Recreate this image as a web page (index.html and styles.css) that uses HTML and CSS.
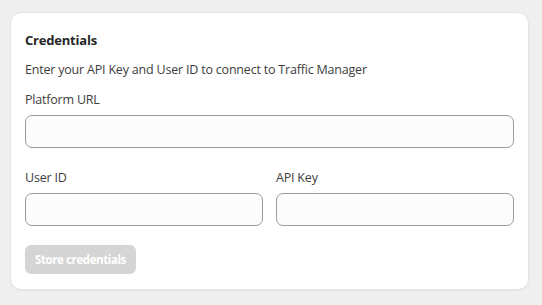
FILE: index.html
```html
<!DOCTYPE html>
<html lang="en">
<head>
<meta charset="utf-8">
<title>Credentials</title>
<link rel="stylesheet" href="styles.css">
</head>
<body>
<div class="page">
  <section class="card">
    <h2 class="title">Credentials</h2>
    <p class="desc">Enter your API Key and User ID to connect to Traffic Manager</p>
    <div class="field">
      <label class="label" for="url">Platform URL</label>
      <input class="input" id="url" type="text">
    </div>
    <div class="row">
      <div class="field">
        <label class="label" for="uid">User ID</label>
        <input class="input" id="uid" type="text">
      </div>
      <div class="field">
        <label class="label" for="key">API Key</label>
        <input class="input" id="key" type="text">
      </div>
    </div>
    <div class="actions">
      <button class="btn" type="button" disabled>Store credentials</button>
    </div>
  </section>
</div>
</body>
</html>
```
FILE: styles.css
```css
html, body {
  margin: 0;
  padding: 0;
  background: #efefef;
  font-family: "Open Sans", "Noto Sans", sans-serif;
  color: #3a3a3a;
}
.page {
  padding: 12px 13px 15px 10px;
}
.card {
  box-sizing: border-box;
  height: 278px;
  background: #fff;
  border: 1px solid #e4e4e4;
  border-radius: 11px;
  box-shadow: 0 1px 1px rgba(0, 0, 0, 0.04);
  padding: 17px 14px 15px 14px;
  display: flex;
  flex-direction: column;
}
.title {
  margin: 0;
  font-size: 13px;
  font-weight: 700;
  letter-spacing: -0.2px;
  line-height: 20px;
  color: #262626;
}
.desc {
  margin: 10px 0 0;
  font-size: 12.5px;
  letter-spacing: -0.2px;
  line-height: 20px;
  color: #3d3d3d;
}
.field {
  display: flex;
  flex-direction: column;
  gap: 5px;
  margin-top: 10px;
}
.label {
  font-size: 12.5px;
  letter-spacing: -0.2px;
  line-height: 20px;
  color: #3d3d3d;
}
.input {
  box-sizing: border-box;
  height: 33px;
  width: 100%;
  border: 1px solid #9a9a9a;
  border-radius: 7px;
  background: #fcfcfc;
  margin: 0;
  font: inherit;
}
.row {
  display: grid;
  grid-template-columns: 1fr 1fr;
  column-gap: 13px;
  margin-top: 10px;
}
.actions {
  margin-top: 19px;
}
.btn {
  height: 29px;
  padding: 0 10px;
  border: none;
  border-radius: 6px;
  background: #d5d5d5;
  color: #fff;
  font-family: "Open Sans", "Noto Sans", sans-serif;
  font-size: 11.5px;
  letter-spacing: -0.4px;
  font-weight: 700;
}
```
